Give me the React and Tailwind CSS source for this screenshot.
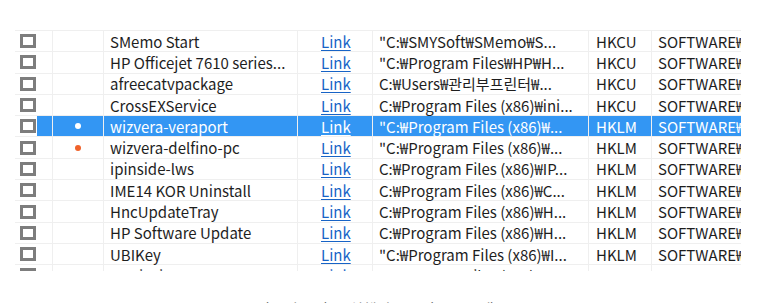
const rows = [
  { name: "SMemo Start", path: "\"C:₩SMYSoft₩SMemo₩S...", hive: "HKCU" },
  { name: "HP Officejet 7610 series...", path: "\"C:₩Program Files₩HP₩H...", hive: "HKCU" },
  { name: "afreecatvpackage", path: "C:₩Users₩관리부프린터₩...", hive: "HKCU" },
  { name: "CrossEXService", path: "C:₩Program Files (x86)₩ini...", hive: "HKCU" },
  { name: "wizvera-veraport", path: "\"C:₩Program Files (x86)₩...", hive: "HKLM", selected: true, dot: "white" },
  { name: "wizvera-delfino-pc", path: "\"C:₩Program Files (x86)₩...", hive: "HKLM", dot: "orange" },
  { name: "ipinside-lws", path: "C:₩Program Files (x86)₩IP...", hive: "HKLM" },
  { name: "IME14 KOR Uninstall", path: "C:₩Program Files (x86)₩C...", hive: "HKLM" },
  { name: "HncUpdateTray", path: "C:₩Program Files (x86)₩H...", hive: "HKLM" },
  { name: "HP Software Update", path: "C:₩Program Files (x86)₩H...", hive: "HKLM" },
  { name: "UBIKey", path: "\"C:₩Program Files (x86)₩I...", hive: "HKLM" },
  { name: "MagicLine4NX", path: "C:₩Program Files (x86)₩M...", hive: "HKLM" },
];

const Row = ({ row }) => {
  const sel = row.selected;
  const cell = "h-full flex items-center border-r border-[#efefef] shrink-0";
  const text = sel ? "text-white" : "text-[#1e1e1e]";
  return (
    <div className="flex h-[21.3px] border-b border-[#efefef]">
      {/* CHECKBOX */}
      <div className={`${cell} w-[38px] pl-[5px] gap-[1px]`}>
        <div className="w-[16px] h-[14px] border-[3px] border-[#7d7d7d] bg-white shrink-0" />
        {sel && <div className="flex-1 h-full bg-[#3396f3]" />}
      </div>

      {/* STATUS */}
      <div className={`${cell} w-[51px] justify-center ${sel ? "bg-[#3396f3]" : ""}`}>
        {row.dot === "white" && <span className="w-[6px] h-[6px] rounded-full bg-white" />}
        {row.dot === "orange" && <span className="w-[6px] h-[6px] rounded-full bg-[#f0622a]" />}
      </div>

      <div className={`${cell} w-[194px] pl-[6px] ${text} ${sel ? "bg-[#3396f3]" : ""}`}>
        {row.name}
      </div>

      <div className={`${cell} w-[75px] pl-[23px] ${sel ? "bg-[#3396f3] text-white" : "text-[#1763c6]"}`}>
        <span className="underline underline-offset-2">Link</span>
      </div>

      <div className={`${cell} w-[216px] pl-[6px] ${text} ${sel ? "bg-[#3396f3]" : ""}`}>
        {row.path}
      </div>

      <div className={`${cell} w-[63px] pl-[7px] ${text} ${sel ? "bg-[#3396f3]" : ""}`}>
        {row.hive}
      </div>

      <div className={`h-full flex items-center flex-1 pl-[6px] overflow-hidden whitespace-nowrap ${text} ${sel ? "bg-[#3396f3]" : ""}`}>
        SOFTWARE₩
      </div>
    </div>
  );
};

export default function App() {
  return (
    <div
      className="w-[764px] h-[303px] bg-white overflow-hidden text-[15px] leading-none"
      style={{ fontFamily: '"Noto Sans CJK KR", "Noto Sans", sans-serif' }}
    >
      {/* TABLE */}
      <div className="ml-[15px] mt-[30px] w-[726px] h-[241px] overflow-hidden border-t border-[#efefef]">
        {rows.map((row) => (
          <Row key={row.name} row={row} />
        ))}
      </div>

      {/* CAPTION */}
      <p className="mt-[28px] text-center text-[15px] leading-[20px] text-[#444]">
        컴퓨터 시작 시 실행되는 보안 프로그램들
      </p>
    </div>
  );
}
